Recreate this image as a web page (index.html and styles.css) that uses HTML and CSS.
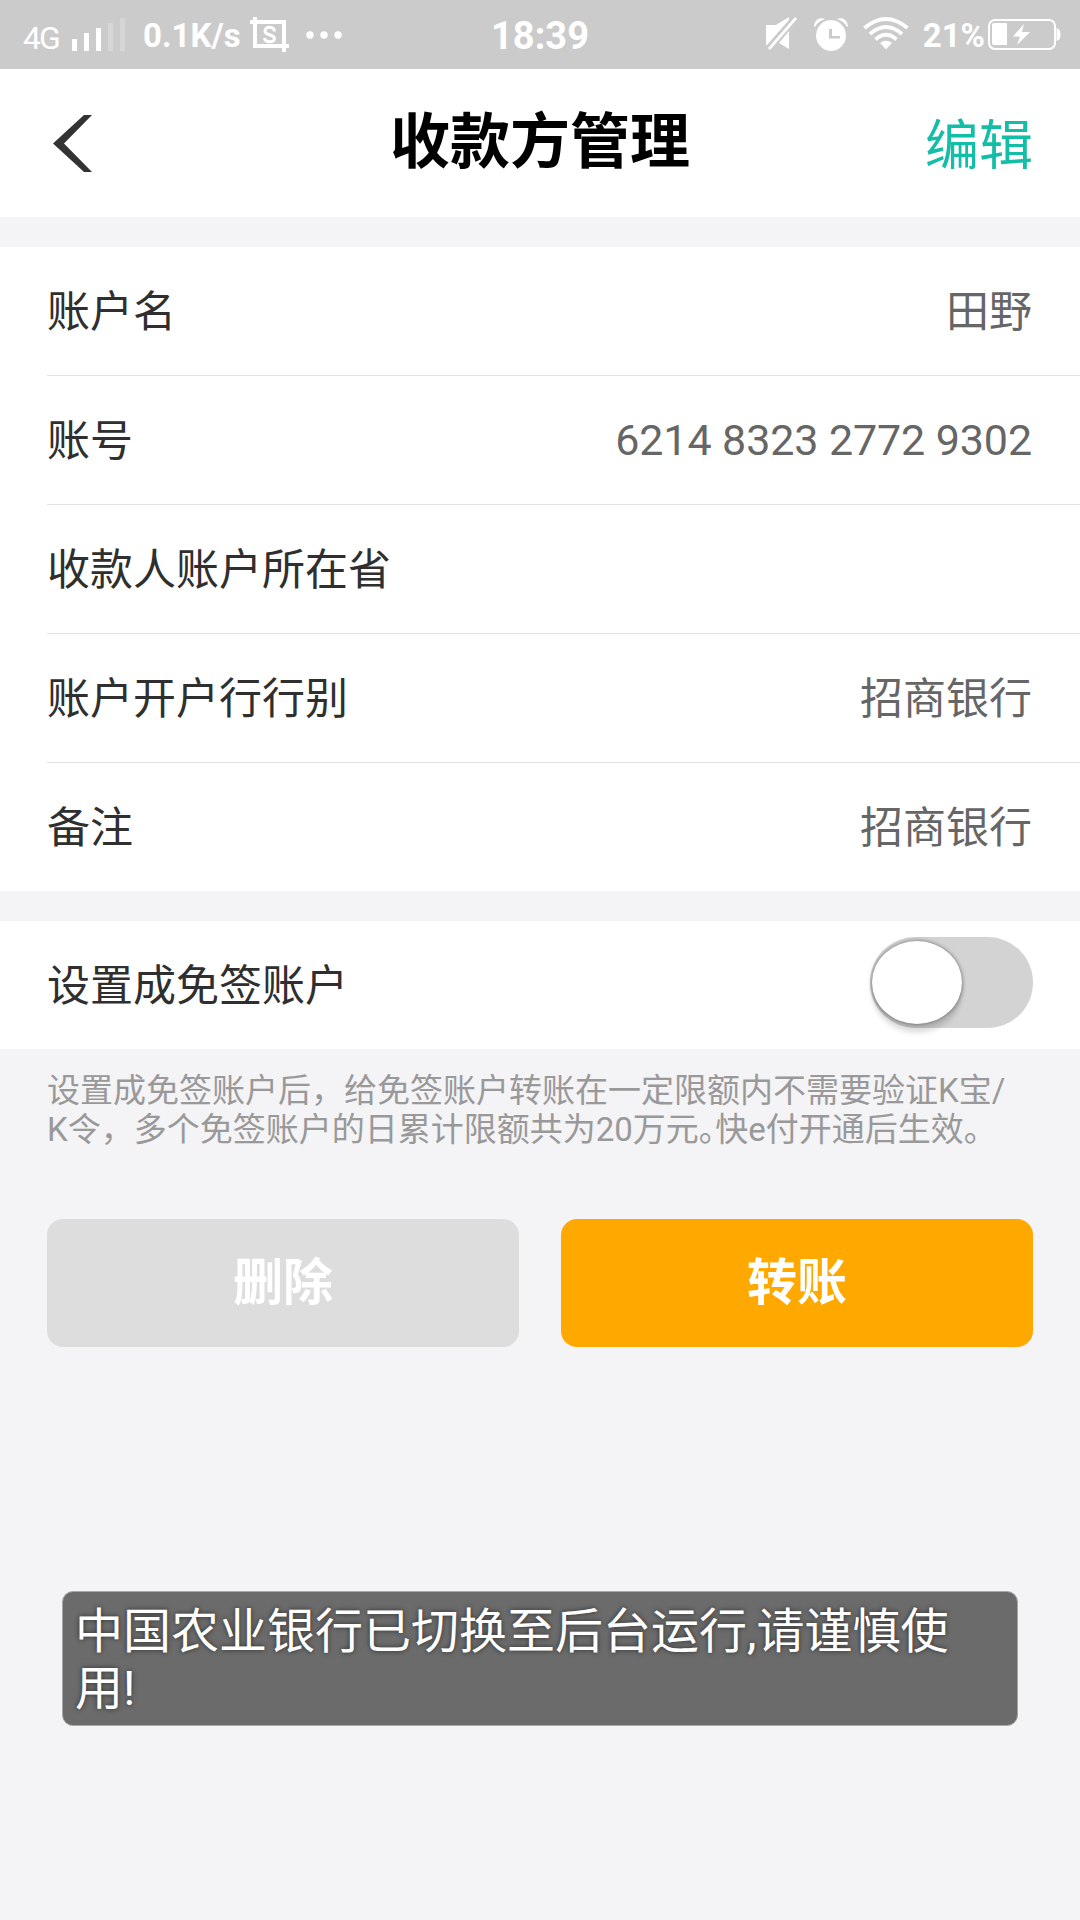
FILE: index.html
```html
<!DOCTYPE html>
<html lang="zh-CN">
<head>
<meta charset="utf-8">
<title>收款方管理</title>
<link rel="stylesheet" href="styles.css">
</head>
<body>
<div class="screen">
  <div class="status">
    <div class="status-left">
      <span class="net">4G</span>
      <svg class="signal" width="54" height="33" viewBox="0 0 54 33" fill="#fff"><path d="M0 21h5v12H0zM12 15h5v18h-5zM24 10h5v23h-5z"/><path fill-opacity=".22" d="M36 5h5v28h-5zM48 0h5v33h-5z"/></svg>
      <span class="speed">0.1K/s</span>
      <svg class="shot" width="40" height="36" viewBox="0 0 40 36" fill="none" stroke="#fff"><path stroke-width="4" d="M0 5h34v30M5 0v29h34"/><path stroke-width="3" d="M24.500 14.500C24 9 15 9 15 14c0 5 9.500 3 9.500 7.500C24.500 26 15 26 14.500 21"/></svg>
      <svg class="dots" width="36" height="8" viewBox="0 0 36 8" fill="#fff"><circle cx="4" cy="4" r="3.700"/><circle cx="18" cy="4" r="3.700"/><circle cx="32" cy="4" r="3.700"/></svg>
    </div>
    <div class="time">18:39</div>
    <div class="status-right">
      <svg class="mute" width="32" height="34" viewBox="0 0 32 34" fill="#fff"><path d="M0 8h10L23 0v3L1 28H0zM23 14v18l-10-6z"/><path d="M29 0l2 2L4 33l-2-2z"/></svg>
      <svg class="alarm" width="34" height="33" viewBox="0 0 34 33" fill="#fff"><path fill-rule="evenodd" d="M17 2a15 15.500 0 1 0 .01 0zM15 11h3v7h8v2.500H15z"/><path d="M0 8C1 1 6-1 11 1 6 3 3 5 1 9zM34 8C33 1 28-1 23 1c5 2 8 4 10 8z"/></svg>
      <svg class="wifi" width="46" height="33" viewBox="0 0 46 33" fill="none" stroke="#fff" stroke-width="3.800"><path d="M1.500 11Q23-7 44.500 11M7 17Q23 3 39 17M12.500 22.500Q23 13 33.500 22.500"/><path fill="#fff" stroke="none" d="M17 26q6-4.500 12 0l-6 6.500z"/></svg>
      <span class="percent">21%</span>
      <svg class="battery" width="73" height="31" viewBox="0 0 73 31"><rect x="1" y="1" width="66" height="29" rx="6" fill="none" stroke="#fff" stroke-width="2"/><path fill="#fff" d="M4 6q0-2 2-2h13v22H6q-2 0-2-2zM68.500 9q4 1 4 6.500t-4 6.500zM36 5L25 17.500h7L29 26l13-13h-8z"/></svg>
    </div>
  </div>

  <header class="header">
    <svg class="back" width="40" height="60" viewBox="0 0 40 60" fill="#333"><path d="M32 1h8L12 29.500 40 58h-8L1 29.500z"/></svg>
    <h1 class="title">收款方管理</h1>
    <span class="edit">编辑</span>
  </header>

  <section class="group">
    <div class="row"><span>账户名</span><span class="value">田野</span></div>
    <div class="row"><span>账号</span><span class="value number">6214 8323 2772 9302</span></div>
    <div class="row"><span>收款人账户所在省</span></div>
    <div class="row"><span>账户开户行行别</span><span class="value">招商银行</span></div>
    <div class="row"><span>备注</span><span class="value">招商银行</span></div>
  </section>

  <section class="group">
    <div class="row toggle-row"><span>设置成免签账户</span><span class="toggle"><span class="knob"></span></span></div>
  </section>

  <p class="note">设置成免签账户后，给免签账户转账在一定限额内不需要验证K宝/<br>K令，多个免签账户的日累计限额共为20万元<span class="half">。</span>快e付开通后生效。</p>

  <div class="actions">
    <div class="button delete">删除</div>
    <div class="button transfer">转账</div>
  </div>

  <div class="toast">中国农业银行已切换至后台运行,请谨慎使<br>用!</div>
</div>
</body>
</html>
```
FILE: styles.css
```css
* { box-sizing: border-box; }
body {
  margin: 0;
  font-family: Roboto, "Noto Sans CJK SC", sans-serif;
  background: #f4f3f6;
  color: #2f2f2f;
}
.screen { width: 1080px; height: 1920px; overflow: hidden; }

.status {
  height: 69px;
  display: grid;
  grid-template-columns: 1fr auto 1fr;
  background: #cbcbcb;
  color: #fff;
  font-weight: 700;
  font-size: 33px;
  line-height: 71px;
}
.status-left, .status-right { display: flex; align-items: flex-start; }
.status-left { padding-left: 23px; }
.status-right { justify-content: flex-end; padding-right: 19px; }
.net { width: 49px; font-weight: 400; font-size: 32px; line-height: 77px; letter-spacing: -2px; }
.signal { margin-top: 18px; }
.speed { width: 107px; margin-left: 17px; }
.shot { margin-top: 17px; }
.dots { margin: 31px 0 0 16px; }
.time { font-size: 38px; line-height: 72px; }
.mute { margin-top: 17px; }
.alarm { margin: 18px 0 0 16px; }
.wifi { margin: 17px 0 0 15px; }
.percent { margin-left: 14px; font-size: 33px; }
.battery { margin: 19px 0 0 3px; }

.header {
  height: 148px;
  padding: 0 47px 0 52px;
  display: grid;
  grid-template-columns: 1fr 305px 1fr;
  background: #fff;
}
.back { margin-top: 45px; }
.title { margin: 0; font-size: 60px; line-height: 148px; font-weight: 700; color: #000; }
.edit { justify-self: end; font-size: 54px; line-height: 156px; color: #13bda6; }

.group { margin-top: 30px; background: #fff; padding-left: 47px; }
.row {
  height: 129px;
  padding: 1px 48px 0 0;
  display: flex;
  justify-content: space-between;
  align-items: center;
  font-size: 43px;
  line-height: 60px;
  border-bottom: 1px solid #e3e3e3;
}
.row:last-child { height: 128px; border-bottom: 0; }
.value { color: #666; }
.number { padding-bottom: 2px; letter-spacing: -.1px; }
.toggle {
  width: 163px;
  height: 91px;
  margin-bottom: 7px;
  border-radius: 46px;
  padding: 4px 2px;
  background: #d3d3d3;
}
.toggle-row { padding-right: 47px; }
.knob {
  display: block;
  width: 90px;
  height: 83px;
  border-radius: 50%;
  background: #fff;
  box-shadow: 0 0 4px rgba(0,0,0,.5), 0 9px 5px rgba(0,0,0,.13);
}

.note { margin: 22px 0 0 47px; font-size: 33px; line-height: 39px; color: #999; white-space: nowrap; }
.half { font-feature-settings: "halt"; }

.actions { display: flex; gap: 42px; margin: 70px 47px 0; }
.button {
  flex: 1;
  height: 128px;
  border-radius: 16px;
  font-size: 50px;
  line-height: 129px;
  font-weight: 700;
  text-align: center;
  color: #fff;
}
.delete { background: #ddd; }
.transfer { background: #ffa900; }

.toast {
  width: 956px;
  height: 135px;
  margin: 244px 0 0 62px;
  padding: 11px 12px;
  border: 1px solid #a6a5a7;
  border-radius: 11px;
  background: #6b6b6b;
  color: #fff;
  font-size: 48px;
  line-height: 57px;
  white-space: nowrap;
  text-shadow: 0 0 5px rgba(0,0,0,.6);
}
```
